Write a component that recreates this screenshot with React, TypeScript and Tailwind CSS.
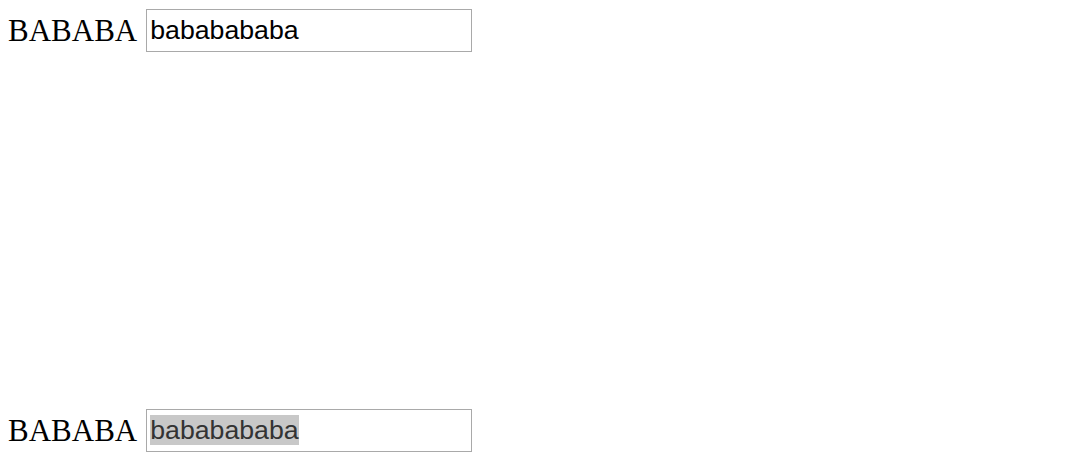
import React from "react";

function Row({ selected }: { selected?: boolean }) {
  return (
    <div className="flex items-center h-[43px]">
      <span
        className="text-[31px] leading-none text-black"
        style={{ fontFamily: '"Liberation Serif", serif' }}
      >
        BABABA
      </span>
      <div className="ml-[9px] w-[326px] h-[43px] border border-[#a9a9a9] bg-white flex items-center pl-[3px] pb-[2px]">
        <span
          className={
            "text-[26.7px] leading-[30px] " +
            (selected ? "bg-[#c8c8c8] text-[#333333]" : "text-black")
          }
          style={{ fontFamily: '"Liberation Sans", Arial, sans-serif' }}
        >
          bababababa
        </span>
      </div>
    </div>
  );
}

export default function App() {
  return (
    <div className="w-[1089px] h-[474px] bg-white pl-[8px] pt-[9px] flex flex-col gap-[357px]">
      <Row />
      <Row selected />
    </div>
  );
}
